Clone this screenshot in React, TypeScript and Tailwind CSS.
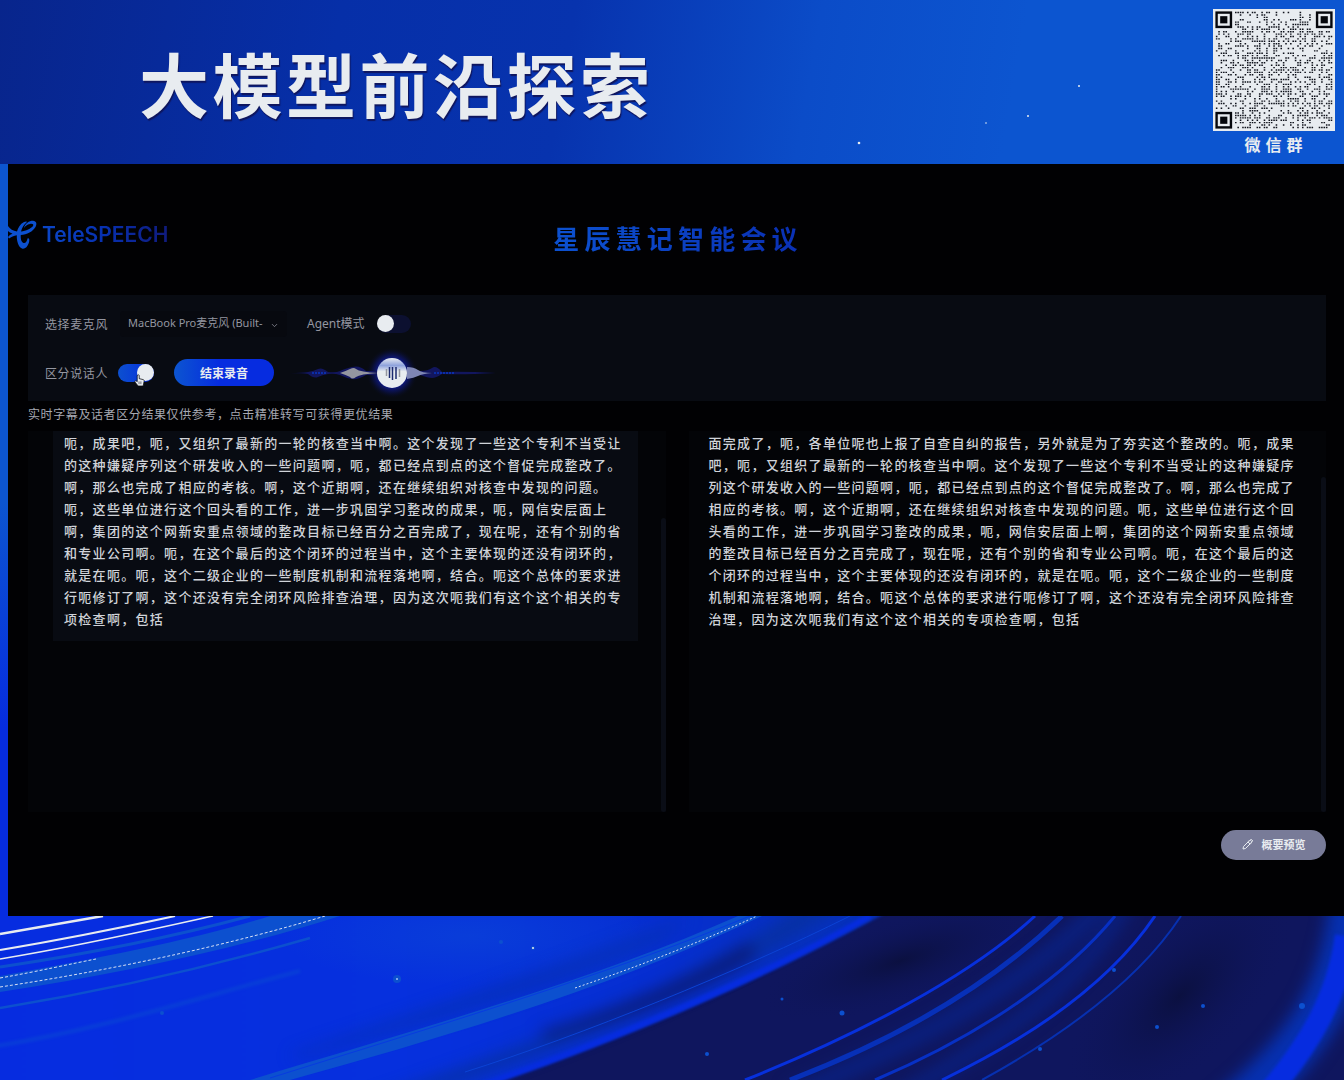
import React, { useMemo } from "react";
import { ChevronDown } from "lucide-react";

const LEFT_TEXT =
  "呃，成果吧，呃，又组织了最新的一轮的核查当中啊。这个发现了一些这个专利不当受让的这种嫌疑序列这个研发收入的一些问题啊，呃，都已经点到点的这个督促完成整改了。啊，那么也完成了相应的考核。啊，这个近期啊，还在继续组织对核查中发现的问题。呃，这些单位进行这个回头看的工作，进一步巩固学习整改的成果，呃，网信安层面上啊，集团的这个网新安重点领域的整改目标已经百分之百完成了，现在呢，还有个别的省和专业公司啊。呃，在这个最后的这个闭环的过程当中，这个主要体现的还没有闭环的，就是在呃。呃，这个二级企业的一些制度机制和流程落地啊，结合。呃这个总体的要求进行呃修订了啊，这个还没有完全闭环风险排查治理，因为这次呃我们有这个这个相关的专项检查啊，包括";
const RIGHT_TEXT =
  "面完成了，呃，各单位呢也上报了自查自纠的报告，另外就是为了夯实这个整改的。" + LEFT_TEXT;

function QrCode() {
  const n = 49;
  const dots = useMemo(() => {
    const out: string[] = [];
    let seed = 20731;
    for (let y = 0; y < n; y++) {
      for (let x = 0; x < n; x++) {
        seed = (seed * 1103515245 + 12345) % 2147483648;
        const corner =
          (x < 8 && y < 8) || (x > n - 9 && y < 8) || (x < 8 && y > n - 9);
        if (!corner && seed / 2147483648 < 0.42)
          out.push(`M${x + 0.2} ${y + 0.2}h.65v.6h-.65z`);
      }
    }
    return out.join("");
  }, []);
  const eyes = [
    [0, 0],
    [n - 7, 0],
    [0, n - 7],
  ];
  return (
    <svg viewBox="-1 -1 51 51" className="size-[122px] bg-[#e8ecf0]" role="img" aria-label="微信群二维码">
      <path d={dots} fill="#10131c" />
      {eyes.map(([x, y]) => (
        <g key={`${x}-${y}`}>
          <rect x={x + 0.5} y={y + 0.5} width="6" height="6" fill="none" stroke="#05070c" strokeWidth="1" />
          <rect x={x + 2} y={y + 2} width="3" height="3" fill="#05070c" />
        </g>
      ))}
    </svg>
  );
}

function TelecomMark() {
  return (
    <svg viewBox="0 0 30 30" className="h-[30px] w-[30px]" fill="#0c50cf" aria-hidden="true">
      <path d="M0 6C2 9 5 11 9 11.500C10 8 12 4 16 2C18 1 19.500 1.500 18.500 2.500C16 4.500 14 7.500 13 11.500C18 11 23 8.500 25 6C26 4.500 24.500 3.500 22 4C19 4.500 17.500 6 16 8C17 3.500 21 .8 25 .8C28.500 1 29.200 4 27.500 7C25 11.500 19 14.500 12.800 15C12.500 18.500 13.200 22 15.500 23C17.500 23.500 19 21.500 19.500 18.500C21.500 17.500 21.800 20 20.800 23C19.500 27 16.500 29.500 14 28.500C10.500 27 8.500 21 8.800 15.200C6 15.500 3 17 1 18.500L0 17C1.500 15.200 3 14.200 4.500 13.800C2.500 12.800 1 12 0 11Z" />
    </svg>
  );
}

function Waveform() {
  return (
    <svg viewBox="0 0 206 52" className="h-[52px] w-[206px]" aria-hidden="true">
      <defs>
        <radialGradient id="glow">
          <stop offset="0.5" stopColor="#101c9a" />
          <stop offset="0.75" stopColor="#0b1250" stopOpacity="0.7" />
          <stop offset="1" stopColor="#080b12" stopOpacity="0" />
        </radialGradient>
        <linearGradient id="orb" x2="0" y2="1">
          <stop offset="0" stopColor="#e8ecf0" />
          <stop offset="0.25" stopColor="#8fa3dc" />
          <stop offset="0.45" stopColor="#e8ecf0" />
        </linearGradient>
      </defs>
      <circle cx="102" cy="26" r="26" fill="url(#glow)" />
      <path d="M0 26Q12 26 18 25T28 22T38 25Q46 26 50 24T62 20T76 24H130Q138 24 142 21T152 25Q172 24 206 26Q172 28 152 27Q146 31 142 31T130 28H76Q68 33 62 32T50 28Q44 26 38 27T28 30T18 27Q12 26 0 26Z" fill="#12165e" />
      <path d="M50 26Q56 24 60 22T66 22Q70 25 88 26Q70 27 66 30T60 30Q56 28 50 26Z" fill="#9496a0" />
      <path d="M117 20Q124 20 128 23T142 26Q132 27 128 29T117 32Z" fill="#7e86b4" />
      <path d="M22 26H36M144 26H164" stroke="#0a2ea8" strokeWidth="2" strokeDasharray="2 1" />
      <circle cx="102" cy="26" r="15" fill="url(#orb)" />
      <path d="M96.500 22V29M109.500 22V30" stroke="#9496a0" strokeWidth="1.500" />
      <path d="M99.500 20V31M102.500 20V33M106 20V32" stroke="#1c2a6e" strokeWidth="1.500" />
    </svg>
  );
}

function Pointer() {
  return (
    <svg viewBox="0 0 12 14" className="pointer-events-none absolute left-4 top-2.5 h-[13px] w-[11px]" aria-hidden="true">
      <path d="M4 1C5 .4 5.700 1 5.700 2V5L10 6C11 6.300 11.200 7 11 8L10 13H4.500L1 8.500C.7 7.500 1.600 7 2.500 7.500L3.500 8.300V2Z" fill="#e8ecf0" stroke="#05070c" strokeWidth=".8" />
      <path d="M5.500 8V11M7.500 8V11" stroke="#20242e" strokeWidth=".7" />
    </svg>
  );
}

function Streaks() {
  return (
    <svg viewBox="0 0 1344 164" preserveAspectRatio="none" className="absolute inset-0 h-full w-full" aria-hidden="true">
      <defs>
        <linearGradient id="sea" gradientUnits="userSpaceOnUse" x1="0" x2="880" y1="0" y2="0">
          <stop offset="0" stopColor="#062ce0" />
          <stop offset="0.5" stopColor="#0630dd" />
          <stop offset="0.75" stopColor="#062ed0" />
          <stop offset="1" stopColor="#0630b8" />
        </linearGradient>
        <radialGradient id="haze">
          <stop offset="0" stopColor="#0a40d8" stopOpacity="0.8" />
          <stop offset="1" stopColor="#0a40d8" stopOpacity="0" />
        </radialGradient>
        <radialGradient id="shade">
          <stop offset="0" stopColor="#0b1040" />
          <stop offset="1" stopColor="#0f165e" stopOpacity="0" />
        </radialGradient>
        <filter id="soft" filterUnits="userSpaceOnUse" x="-100" y="-100" width="1600" height="400" colorInterpolationFilters="sRGB">
          <feGaussianBlur stdDeviation="8" />
        </filter>
        <filter id="edge" filterUnits="userSpaceOnUse" x="-100" y="-100" width="1600" height="400" colorInterpolationFilters="sRGB">
          <feGaussianBlur stdDeviation="1.500" />
        </filter>
      </defs>
      <rect width="1344" height="164" fill="#0f165e" />
      <path d="M-40 -30H930L880 0C770 60 620 125 500 164L400 200H-40Z" fill="url(#sea)" filter="url(#edge)" />
      <ellipse cx="470" cy="20" rx="190" ry="50" fill="url(#haze)" />
      <g filter="url(#soft)">
        <path d="M350 190C560 120 690 70 800 -10H845C740 60 600 120 450 170Z" fill="#0730a4" />
        <path d="M540 116C620 92 680 66 750 26L756 40C700 78 620 106 545 122Z" fill="#0a1c78" />
        <path d="M290 140C420 95 540 60 690 0L660 25C530 80 410 110 300 142Z" fill="#0630b8" />
      </g>
      <path d="M480 170C610 125 765 60 870 0" stroke="#062cdf" strokeWidth="6" fill="none" filter="url(#edge)" />
      <path d="M465 156C580 120 740 55 850 0" stroke="#0b42d5" strokeWidth="1" fill="none" />
      <path d="M250 164C400 118 590 66 738 0H762C620 68 450 120 290 164Z" fill="#0c50cf" />
      <path d="M270 162C430 112 610 58 750 0" stroke="#073be0" strokeWidth="1" fill="none" />
      <path d="M575 72C640 50 700 26 757 0" stroke="#d5dff5" strokeWidth="1" strokeDasharray="2 2" fill="none" />
      <path d="M0 60C100 42 200 22 270 0H340C240 32 120 58 0 76Z" fill="#0c50cf" />
      <g fill="none">
        <path d="M0 18L103 0" stroke="#e8ecf0" strokeWidth="2.500" />
        <path d="M0 34C60 24 120 12 175 0" stroke="#e8ecf0" strokeWidth="2" />
        <path d="M0 43C80 30 150 14 213 0" stroke="#e8ecf0" strokeWidth="1.600" />
        <path d="M0 51C100 36 180 19 250 0" stroke="#0c50cf" strokeWidth="3" />
        <path d="M0 62C40 55 70 48 96 43M0 71C120 53 240 26 325 0" stroke="#d5dff5" strokeWidth="1" strokeDasharray="3 2" />
        <path d="M0 92C110 74 220 48 310 22" stroke="#0c50cf" strokeWidth="2.500" />
        <path d="M-10 131C100 114 190 84 300 55" stroke="#0a48d4" strokeWidth="4" opacity=".6" filter="url(#edge)" />
      </g>
      <ellipse cx="900" cy="45" rx="150" ry="45" fill="url(#shade)" transform="rotate(-18 900 45)" />
      <ellipse cx="1180" cy="80" rx="150" ry="70" fill="url(#shade)" transform="rotate(-45 1180 80)" />
      <g fill="none" filter="url(#soft)">
        <path d="M790 180C930 120 1040 60 1110 -20" stroke="#0a2080" strokeWidth="18" />
        <path d="M880 190C1010 120 1090 60 1130 -20" stroke="#0a2080" strokeWidth="14" />
      </g>
      <g fill="none" stroke="#0730dc">
        <path d="M745 164C860 118 970 60 1035 0" strokeWidth="3" />
        <path d="M790 164C910 118 1000 60 1062 0" stroke="#0730b8" strokeWidth="5" />
        <path d="M875 164C990 115 1070 55 1115 0" stroke="#0730c4" strokeWidth="3" />
        <path d="M942 164C1050 112 1118 55 1155 0" strokeWidth="3" />
        <path d="M982 164C1080 110 1145 55 1181 0" stroke="#0730b0" strokeWidth="2" />
      </g>
      <path d="M1225 200C1300 140 1345 80 1352 -20" fill="none" stroke="#0630b0" strokeWidth="44" filter="url(#soft)" />
      <path d="M1262 184C1310 130 1338 80 1346 20" fill="none" stroke="#062ce0" strokeWidth="22" filter="url(#edge)" />
      <g fill="#0c50cf">
        <circle cx="397" cy="63" r="4" />
        <circle cx="533" cy="32" r="2" />
        <circle cx="501" cy="26" r="2" />
        <circle cx="162" cy="97" r="2" />
        <circle cx="842" cy="97" r="2.500" />
        <circle cx="707" cy="138" r="2" />
        <circle cx="1157" cy="111" r="2" />
        <circle cx="1203" cy="90" r="2" />
        <circle cx="1302" cy="90" r="3" />
        <circle cx="1114" cy="54" r="2" />
        <circle cx="1040" cy="133" r="2" />
        <circle cx="782" cy="83" r="1.500" />
      </g>
      <circle cx="533" cy="32" r="1" fill="#e8ecf0" />
      <circle cx="397" cy="63" r="1" fill="#9fc0f5" />
    </svg>
  );
}

const switchClass =
  "h-[18px] shrink-0 appearance-none rounded-full before:block before:size-[17px] before:rounded-full before:bg-[#e8ecf0]";

export default function App() {
  return (
    <div lang="zh-CN" className="flex min-h-screen flex-col bg-[#062ce0] font-['Noto_Sans_CJK_SC',sans-serif] text-[#e8ecf0]">
      <header className="relative flex h-[164px] items-start justify-between bg-[linear-gradient(100deg,#08258c_0%,#062fa8_25%,#0733ae_42%,#0b4cc8_60%,#0c55d0_75%)] pl-[139px] pr-[9px]">
        <h1 className="pt-[33px] text-[70px] font-bold leading-[100px] tracking-wider [text-shadow:1px_2px_1px_#0f165e]">
          大模型前沿探索
        </h1>
        <svg viewBox="0 0 300 120" className="absolute right-[220px] top-8 h-[120px] w-[300px]" fill="#e8ecf0" aria-hidden="true">
          <circle cx="35" cy="111" r="1.300" />
          <circle cx="255" cy="54" r="1" />
          <circle cx="204" cy="84" r="1" />
          <circle cx="162" cy="91" r=".8" />
        </svg>
        <figure className="flex flex-col items-center pt-[9px]">
          <QrCode />
          <figcaption className="pl-1 text-[16px] font-bold leading-[26px] tracking-[5px]">微信群</figcaption>
        </figure>
      </header>

      <div className="bg-[linear-gradient(#0c55d0_0%,#0c55d0_45%,#062ce0_75%,#062ce0_100%)] pl-2">
        <main className="bg-[#010103] pb-14 pr-[18px] pt-14">
          <div className="relative flex h-[75px] items-start">
            <div className="flex items-center gap-1">
              <TelecomMark />
              <span className="bg-[linear-gradient(90deg,#0b47c8,#0730b0_50%,#101b7c)] bg-clip-text font-['Inter',sans-serif] text-[21px] font-semibold leading-[30px] text-transparent">
                TeleSPEECH
              </span>
            </div>
            <h2 className="absolute inset-x-0 top-0 bg-[linear-gradient(90deg,#0c50cf_42%,#0a30b4_60%)] bg-clip-text pl-[22px] text-center text-[26px] font-bold leading-9 tracking-[0.2em] text-transparent">
              星辰慧记智能会议
            </h2>
          </div>

          <div className="pl-5">
            <section className="flex h-[106px] flex-col justify-end bg-[#080b12] pb-1 pl-[17px] text-[12px] tracking-wider text-[#9496a0]">
              <div className="flex h-[49px] items-center">
                <label htmlFor="mic">选择麦克风</label>
                <div className="relative ml-3 w-[167px]">
                  <select id="mic" className="h-[26px] w-full appearance-none rounded-sm bg-[#07090f] pl-2 font-['Noto_Sans','Noto_Sans_CJK_SC',sans-serif] text-[11px] tracking-normal">
                    <option>MacBook Pro麦克风 (Built-</option>
                  </select>
                  <ChevronDown className="pointer-events-none absolute right-2 top-2.5 size-[9px]" />
                </div>
                <label htmlFor="agent" className="ml-5 font-['Noto_Sans','Noto_Sans_CJK_SC',sans-serif] tracking-normal">Agent模式</label>
                <input id="agent" type="checkbox" className={`${switchClass} ml-3 w-[34px] bg-[#0c1030]`} />
              </div>
              <div className="flex h-[49px] items-center">
                <label htmlFor="speaker">区分说话人</label>
                <div className="relative ml-[10px] flex">
                  <input id="speaker" type="checkbox" defaultChecked className={`${switchClass} w-9 bg-[linear-gradient(90deg,#0c50cf,#062ce0)] before:ml-auto`} />
                  <Pointer />
                </div>
                <button type="button" className="ml-5 h-[27px] w-[100px] rounded-full bg-[linear-gradient(90deg,#0c55d0,#062ce0_45%)] text-[12px] font-bold tracking-normal text-[#e8ecf0]">
                  结束录音
                </button>
                <div className="ml-4">
                  <Waveform />
                </div>
              </div>
            </section>

            <p className="pt-0.5 text-[12px] leading-[22px] tracking-wider text-[#a6a8b2]">
              实时字幕及话者区分结果仅供参考，点击精准转写可获得更优结果
            </p>

            <div className="mt-1.5 grid h-[381px] grid-cols-2 gap-[23px] text-[13px] font-medium leading-[22px] tracking-widest text-[#d0d3d9]">
              <section className="flex justify-between bg-[#030407] pl-[25px]">
                <p className="w-[585px] self-start bg-[#080b12] pb-[11px] pl-[11px] pr-3 pt-px">{LEFT_TEXT}</p>
                <div className="h-[294px] w-[5px] self-end rounded-full bg-[#0a0d16]" />
              </section>
              <section className="flex justify-between bg-[#030407] pl-5">
                <p className="w-[590px] self-start pt-px">{RIGHT_TEXT}</p>
                <div className="h-[335px] w-[5px] self-end rounded-full bg-[#0a0d16]" />
              </section>
            </div>

            <div className="mt-[18px] flex justify-end">
              <button type="button" className="flex h-[30px] w-[105px] items-center justify-center gap-2 rounded-full bg-[#787b98] pb-0.5 text-[11px] font-bold">
                <svg viewBox="0 0 12 12" className="size-3" fill="none" stroke="currentColor" aria-hidden="true">
                  <path d="M1 11L1.500 8.500L6 4L8 6L3.500 10.500ZM6 4L7 2.500L8 3L9 1.200L10.800 3L9 4L9.500 5L8 6" />
                </svg>
                概要预览
              </button>
            </div>
          </div>
        </main>
      </div>

      <footer className="relative min-h-[164px] flex-1 overflow-hidden">
        <Streaks />
      </footer>
    </div>
  );
}
